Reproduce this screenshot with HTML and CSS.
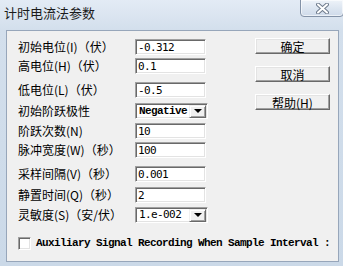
FILE: index.html
```html
<!DOCTYPE html>
<html lang="zh">
<head>
  <meta charset="UTF-8" />
  <title>计时电流法参数</title>
  <link rel="stylesheet" href="styles.css">
</head>
<body>
  <div class="window">
    <div class="titlebar">
      <span class="title">计时电流法参数</span>
      <button class="close" type="button">
        <svg width="13" height="11" viewBox="0 0 13 11">
          <path d="M2 1.5 L11 9.5 M11 1.5 L2 9.5" stroke="#6e7b8c" stroke-width="4" stroke-linecap="round" fill="none"/>
          <path d="M2 1.5 L11 9.5 M11 1.5 L2 9.5" stroke="#ffffff" stroke-width="2" stroke-linecap="round" fill="none"/>
        </svg>
      </button>
    </div>

    <div class="client">
      <div class="main">
        <form class="params">
          <div class="row">
            <label for="initE">初始电位(I)（伏）</label>
            <input class="field" id="initE" type="text" value="-0.312" />
          </div>
          <div class="row gap-3">
            <label for="highE">高电位(H)（伏）</label>
            <input class="field" id="highE" type="text" value="0.1" />
          </div>
          <div class="row gap-8">
            <label for="lowE">低电位(L)（伏）</label>
            <input class="field" id="lowE" type="text" value="-0.5" />
          </div>
          <div class="row gap-5">
            <label>初始阶跃极性</label>
            <div class="combo mono-bold">
              <span class="combo-value">Negative</span>
              <span class="combo-btn"><i class="tri"></i></span>
            </div>
          </div>
          <div class="row gap-4">
            <label for="steps">阶跃次数(N)</label>
            <input class="field" id="steps" type="text" value="10" />
          </div>
          <div class="row gap-3">
            <label for="width">脉冲宽度(W)（秒）</label>
            <input class="field" id="width" type="text" value="100" />
          </div>
          <div class="row gap-8">
            <label for="interval">采样间隔(V)（秒）</label>
            <input class="field" id="interval" type="text" value="0.001" />
          </div>
          <div class="row gap-5">
            <label for="quiet">静置时间(Q)（秒）</label>
            <input class="field" id="quiet" type="text" value="2" />
          </div>
          <div class="row gap-4">
            <label>灵敏度(S)（安/伏）</label>
            <div class="combo mono">
              <span class="combo-value">1.e-002</span>
              <span class="combo-btn"><i class="tri"></i></span>
            </div>
          </div>
        </form>

        <div class="actions">
          <button class="btn" type="button">确定</button>
          <button class="btn" type="button">取消</button>
          <button class="btn" type="button">帮助(H)</button>
        </div>
      </div>

      <div class="check">
        <span class="box"></span>
        <span class="check-text">Auxiliary Signal Recording When Sample Interval :</span>
      </div>
    </div>
  </div>
</body>
</html>
```

FILE: styles.css
```css
body {
  margin: 0;
  overflow: hidden;
  font-family: "Noto Sans CJK SC", "Noto Sans", sans-serif;
  font-size: 12px;
  color: #000;
}

.window {
  width: 343px;
  height: 266px;
  box-sizing: border-box;
  padding: 0 4px 4px 6px;
  background: linear-gradient(180deg, #e3ebf5 0%, #d3dfec 30px, #cbd9e8 100%);
  display: flex;
  flex-direction: column;
}

.titlebar {
  height: 30px;
  position: relative;
  display: flex;
  align-items: flex-start;
}

.title {
  margin: 4px 0 0 -2px;
  font-size: 13px;
  line-height: 18px;
  color: #1b1b1b;
}

.close {
  position: absolute;
  top: -1px;
  right: -5px;
  width: 44px;
  height: 18px;
  padding: 0;
  border: 1px solid #8392a7;
  border-radius: 0 0 4px 4px;
  background: linear-gradient(180deg, #eef3f9 0%, #dde6f1 50%, #cfdaea 100%);
  box-shadow: inset 0 0 0 1px rgba(255, 255, 255, 0.6);
  display: flex;
  align-items: center;
  justify-content: center;
}

.client {
  height: 232px;
  box-sizing: border-box;
  border: 1px solid #97a6ba;
  background: #f0f0f0;
}

.main {
  display: flex;
  justify-content: space-between;
}

.params {
  margin: 0;
  padding: 8px 0 0 11px;
}

.row {
  display: flex;
  align-items: center;
  height: 16px;
}

.gap-3 { margin-top: 3px; }
.gap-4 { margin-top: 4px; }
.gap-5 { margin-top: 5px; }
.gap-8 { margin-top: 8px; }

.row label {
  width: 117px;
  white-space: nowrap;
  line-height: 14px;
}

.field,
.combo,
.box {
  box-sizing: border-box;
  border: 1px solid;
  border-color: #a0a0a0 #ffffff #ffffff #a0a0a0;
  box-shadow: inset 1px 1px #696969, inset -1px -1px #e3e3e3;
  background: #fff;
}

.field {
  width: 71px;
  height: 16px;
  margin: 0;
  padding: 0 0 0 2px;
  outline: none;
  font-family: "DejaVu Sans Mono", monospace;
  font-size: 11px;
  letter-spacing: -0.6px;
  color: #000;
}

.combo {
  width: 73px;
  height: 16px;
  display: flex;
  align-items: center;
  padding: 2px 2px 2px 3px;
}

.combo-value {
  flex: 1;
  overflow: hidden;
  white-space: nowrap;
  line-height: 12px;
}

.mono {
  font-family: "DejaVu Sans Mono", monospace;
  font-size: 11px;
  letter-spacing: -0.6px;
}

.mono-bold,
.check-text {
  font-family: "Liberation Mono", monospace;
  font-weight: bold;
  font-size: 11px;
  letter-spacing: -0.6px;
}

.combo-btn {
  width: 17px;
  height: 13px;
  box-sizing: border-box;
  margin-right: -1px;
  border: 1px solid;
  border-color: #f0f0f0 #696969 #696969 #f0f0f0;
  box-shadow: inset 1px 1px #fff, inset -1px -1px #a0a0a0;
  background: #f0f0f0;
  display: flex;
  align-items: center;
  justify-content: center;
}

.tri {
  width: 0;
  height: 0;
  border-left: 4px solid transparent;
  border-right: 4px solid transparent;
  border-top: 4px solid #000;
}

.actions {
  padding: 7px 8px 0 0;
  display: flex;
  flex-direction: column;
  gap: 12px;
}

.btn {
  width: 75px;
  height: 16px;
  padding: 0;
  box-sizing: border-box;
  border: 1px solid;
  border-color: #ffffff #696969 #696969 #ffffff;
  box-shadow: inset -1px -1px #a0a0a0, inset 1px 1px #e3e3e3;
  background: #f0f0f0;
  font-family: "Noto Sans CJK SC", "Noto Sans", sans-serif;
  font-size: 12px;
  line-height: 13px;
  color: #000;
}

.check {
  margin: 14px 0 0 11px;
  height: 13px;
  display: flex;
  align-items: center;
  gap: 5px;
}

.box {
  flex: none;
  width: 13px;
  height: 13px;
}

.check-text {
  white-space: nowrap;
  line-height: 13px;
}
```
